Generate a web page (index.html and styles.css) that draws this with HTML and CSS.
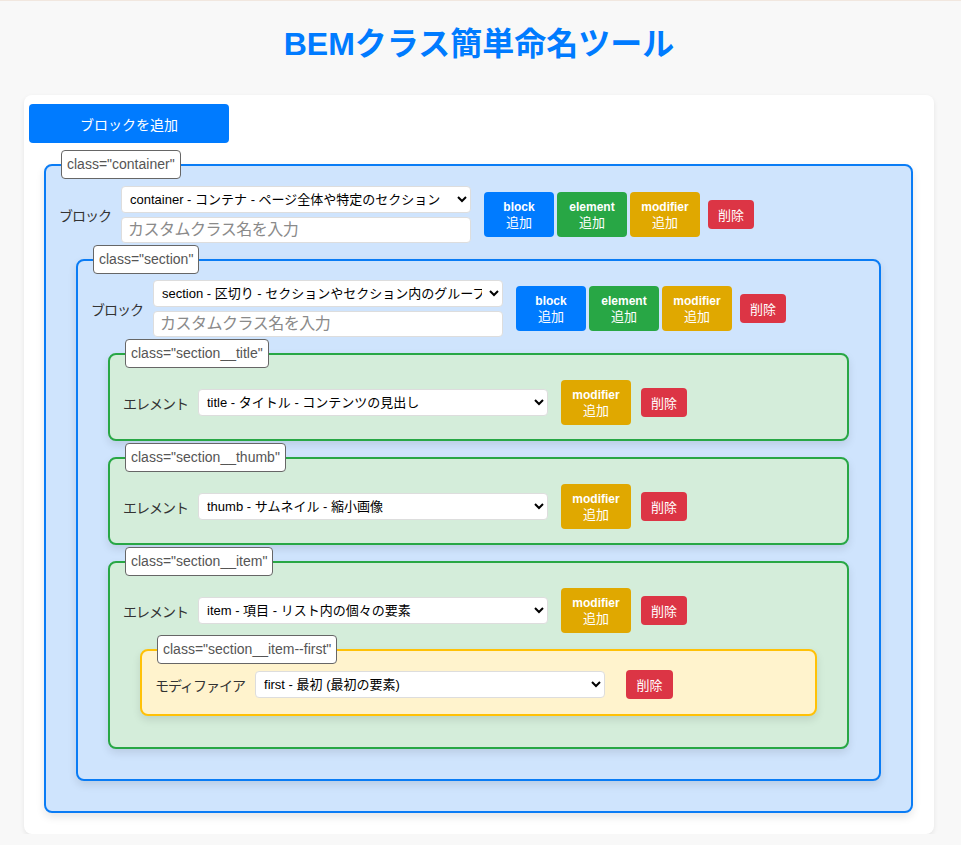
FILE: index.html
```html
<!DOCTYPE html>
<html lang="ja">
<head>
<meta charset="utf-8">
<title>BEMクラス簡単命名ツール</title>
<link rel="stylesheet" href="styles.css">
</head>
<body>
<h1 class="title">BEMクラス簡単命名ツール</h1>
<div class="card">
  <button class="root-add">ブロックを追加</button>

  <div class="block block--b block--root">
    <span class="tag">class="container"</span>
    <div class="row">
      <span class="label">ブロック</span>
      <div class="fields">
        <select class="sel"><option>container - コンテナ - ページ全体や特定のセクション</option></select>
        <input class="inp" type="text" placeholder="カスタムクラス名を入力">
      </div>
      <div class="adds">
        <button class="add add--b"><b>block</b><span>追加</span></button>
        <button class="add add--e"><b>element</b><span>追加</span></button>
        <button class="add add--m"><b>modifier</b><span>追加</span></button>
      </div>
      <button class="del del--b">削除</button>
    </div>
    <div class="children">

      <div class="block block--b">
        <span class="tag">class="section"</span>
        <div class="row">
          <span class="label">ブロック</span>
          <div class="fields">
            <select class="sel"><option>section - 区切り - セクションやセクション内のグループ</option></select>
            <input class="inp" type="text" placeholder="カスタムクラス名を入力">
          </div>
          <div class="adds">
            <button class="add add--b"><b>block</b><span>追加</span></button>
            <button class="add add--e"><b>element</b><span>追加</span></button>
            <button class="add add--m"><b>modifier</b><span>追加</span></button>
          </div>
          <button class="del del--b">削除</button>
        </div>
        <div class="children">

          <div class="block block--e">
            <span class="tag">class="section__title"</span>
            <div class="row">
              <span class="label">エレメント</span>
              <div class="fields">
                <select class="sel"><option>title - タイトル - コンテンツの見出し</option></select>
              </div>
              <div class="adds">
                <button class="add add--m"><b>modifier</b><span>追加</span></button>
              </div>
              <button class="del">削除</button>
            </div>
          </div>

          <div class="block block--e">
            <span class="tag">class="section__thumb"</span>
            <div class="row">
              <span class="label">エレメント</span>
              <div class="fields">
                <select class="sel"><option>thumb - サムネイル - 縮小画像</option></select>
              </div>
              <div class="adds">
                <button class="add add--m"><b>modifier</b><span>追加</span></button>
              </div>
              <button class="del">削除</button>
            </div>
          </div>

          <div class="block block--e">
            <span class="tag">class="section__item"</span>
            <div class="row">
              <span class="label">エレメント</span>
              <div class="fields">
                <select class="sel"><option>item - 項目 - リスト内の個々の要素</option></select>
              </div>
              <div class="adds">
                <button class="add add--m"><b>modifier</b><span>追加</span></button>
              </div>
              <button class="del">削除</button>
            </div>
            <div class="children">
              <div class="block block--m">
                <span class="tag">class="section__item--first"</span>
                <div class="row">
                  <span class="label">モディファイア</span>
                  <div class="fields">
                    <select class="sel"><option>first - 最初 (最初の要素)</option></select>
                  </div>
                  <button class="del del--m">削除</button>
                </div>
              </div>
            </div>
          </div>

        </div>
      </div>

    </div>
  </div>
</div>
</body>
</html>
```

FILE: styles.css
```css
html {
  background: #f8f8f8;
}

body {
  margin: 0;
  padding: 0 27px 0 24px;
  border-top: 1px solid #f1e7df;
  font-family: "Liberation Sans", "Noto Sans CJK JP", sans-serif;
  font-size: 14px;
  color: #333;
}

.title {
  margin: 23px 0 31px;
  font-size: 32px;
  line-height: 40px;
  font-weight: bold;
  text-align: center;
  color: #007bff;
}

.card {
  background: #fff;
  border-radius: 8px;
  box-shadow: 0 2px 5px rgba(0, 0, 0, 0.08);
  padding: 9px 5px 1px;
}

button {
  font-family: "Liberation Sans", "Noto Sans CJK JP", sans-serif;
  border: none;
  cursor: pointer;
  color: #fff;
}

.root-add {
  display: block;
  width: 200px;
  height: 39px;
  border-radius: 4px;
  background: #007bff;
  font-size: 14px;
}

.block {
  position: relative;
  border: 2px solid;
  border-radius: 8px;
  box-shadow: 0 4px 9px rgba(0, 0, 0, 0.1);
  padding: 20px 13px 13px;
}

.block--root {
  margin: 21px 16px 20px 15px;
}

.block--b {
  background: #cfe4fd;
  border-color: #0a7cf5;
}

.children > .block--b {
  padding-top: 19px;
}

.block--e {
  background: #d4edda;
  border-color: #28a745;
  padding-top: 25px;
  padding-bottom: 14px;
}

.block--m {
  background: #fff3cd;
  border-color: #ffc107;
  padding-top: 19px;
  padding-bottom: 15px;
}

.children {
  padding-bottom: 17px;
}

.children > .block {
  margin: 16px 17px 0;
}

.tag {
  position: absolute;
  top: -16px;
  left: 15px;
  background: #fff;
  border: 1px solid #666;
  border-radius: 4px;
  padding: 4px 5px;
  font-size: 14px;
  line-height: 19px;
  color: #555;
  white-space: nowrap;
}

.row {
  display: flex;
  align-items: center;
}

.label {
  margin-right: 10px;
  font-size: 14px;
  letter-spacing: -1px;
  color: #333;
  white-space: nowrap;
}

.fields {
  display: flex;
  flex-direction: column;
  gap: 4px;
  margin-right: 10px;
}

.sel {
  width: 350px;
  height: 27px;
  box-sizing: border-box;
  border: 1px solid #ddd;
  border-radius: 4px;
  background: #fff;
  padding: 0 4px;
  font-family: "Liberation Sans", "Noto Sans CJK JP", sans-serif;
  font-size: 13px;
  color: #000;
}

.inp {
  width: 350px;
  height: 26px;
  box-sizing: border-box;
  border: 1px solid #ddd;
  border-radius: 4px;
  background: #fff;
  padding: 0 6px;
  font-family: "Liberation Sans", "Noto Sans CJK JP", sans-serif;
  font-size: 16px;
  letter-spacing: -0.5px;
}

.inp::placeholder {
  color: #8a8a8a;
}

.adds {
  display: flex;
}

.add {
  width: 70px;
  height: 45px;
  margin-left: 3px;
  border-radius: 4px;
  display: flex;
  flex-direction: column;
  align-items: center;
  justify-content: center;
  padding: 0;
  line-height: 16px;
}

.add b {
  font-size: 12px;
}

.add span {
  font-size: 13px;
}

.add--b {
  background: #007bff;
}

.add--e {
  background: #28a745;
}

.add--m {
  background: #e0a800;
}

.del {
  margin-left: 10px;
  width: 46px;
  height: 29px;
  border-radius: 4px;
  background: #dc3545;
  font-size: 13px;
  padding: 0;
}

.del--b {
  margin-left: 8px;
}

.del--m {
  margin-left: 11px;
  width: 47px;
}
```
